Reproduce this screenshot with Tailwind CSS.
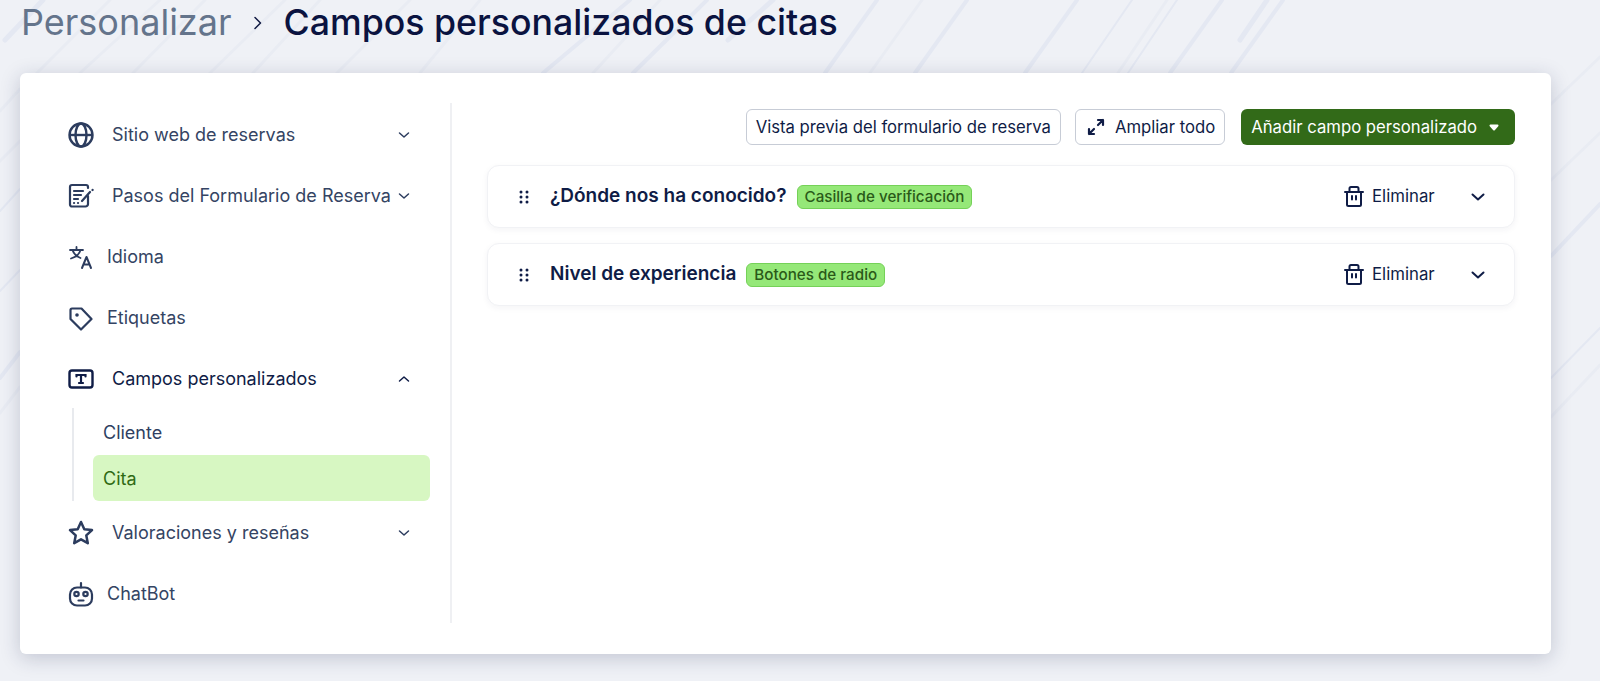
<!DOCTYPE html>
<html lang="es">
  <head>
    <meta charset="UTF-8">
    <meta name="viewport" content="width=device-width, initial-scale=1.0">
    <script src="https://cdn.jsdelivr.net/npm/@tailwindcss/browser@4"></script>
    <title>Campos personalizados de citas</title>
  </head>
  <body class="relative h-[681px] overflow-hidden bg-[#eff1f6] font-['Inter',sans-serif]">
    <!-- fondo con lineas diagonales -->
    <svg class="absolute inset-0" width="1600" height="681" fill="none" stroke-linecap="round">
      <g stroke="#e4e8f2">
        <path stroke-width="5" d="M43 0L5 40M773 0L728 40M1267 0L1240 40"/>
        <path stroke-width="4" d="M630 0L543 73M707 0L633 73M877 0L825 73M967 0L915 73M1077 0L1025 73M1222 0L1170 73M1283 0L1231 73"/>
        <path stroke-width="4" d="M1551 256L1600 204M20 352L0 378"/>
        <path stroke-width="2" d="M1132 0L1082 73M1177 0L1128 73M1551 378L1600 328M20 270L0 291M20 189L0 211"/>
      </g>
      <g stroke="#e9ecf3">
        <path stroke-width="3" d="M110 0L37 73M160 0L80 73M205 0L133 73M285 0L210 73M320 0L253 73M410 0L337 73M480 0L420 73M660 0L593 73M922 0L870 73M1167 0L1118 73"/>
        <path stroke-width="3" d="M1551 104L1600 57M1551 180L1600 133M1551 417L1600 365M20 89L0 111M20 141L0 161M20 387L0 413"/>
      </g>
    </svg>

    <div class="relative flex h-[73px] items-start pl-[21px] pt-[2px]">
      <span class="text-[36px] leading-[41px] text-[#64748b]">Personalizar</span>
      <svg class="mx-[19px] mt-[14px]" width="14" height="14" viewBox="0 0 14 14" fill="none" stroke="#101a42" stroke-width="1.5" stroke-linecap="round" stroke-linejoin="round"><path d="M4 1.500L9.500 7 4 12.500"/></svg>
      <h1 class="text-[35.700px] leading-[41px] font-[450] text-[#0a1340]">Campos personalizados de citas</h1>
    </div>

    <div class="relative mx-[20px] flex h-[581px] w-[1531px] rounded-md bg-white py-[30px] shadow-[0_4px_20px_rgba(30,41,80,0.22)]">
      <!-- menu lateral -->
      <nav class="flex h-[520px] w-[432px] flex-none flex-col border-r-2 border-[#eff0f3] pl-[48px] pr-[20px] pt-[1px] text-[18px] font-normal text-[#344463]">
        <div class="flex h-[61px] flex-none items-center">
          <svg class="mr-[18px] flex-none" width="26" height="26" viewBox="0 0 26 26" fill="none" stroke="#2c3c5e" stroke-width="2.400"><circle cx="13" cy="13" r="11.500"/><ellipse cx="13" cy="13" rx="5.500" ry="11.500"/><path d="M2 13h22"/></svg>
          <span class="flex-1">Sitio web de reservas</span>
          <svg class="mr-[19px]" width="14" height="14" viewBox="0 0 14 14" fill="none" stroke="#2c3c5e" stroke-width="1.500" stroke-linecap="round" stroke-linejoin="round"><path d="M2.500 5l4.500 4 4.500-4"/></svg>
        </div>
        <div class="flex h-[61px] flex-none items-center">
          <svg class="mr-[18px] flex-none" width="26" height="26" viewBox="0 0 26 26" fill="none" stroke="#2c3c5e" stroke-width="2.200" stroke-linecap="round" stroke-linejoin="round"><path d="M20 13v8a2.500 2.500 0 0 1-2.500 2.500H4A2 2 0 0 1 2 21.500V4a2 2 0 0 1 2-2h14a2 2 0 0 1 2 2v1"/><path d="M6 8h9M6 12h7M6 16h4M6 20h.1M10 20h.1"/><path d="M14 18l8-9M24.500 7l.1-.1"/></svg>
          <span class="flex-1 whitespace-nowrap">Pasos del Formulario de Reserva</span>
          <svg class="mr-[19px] flex-none" width="14" height="14" viewBox="0 0 14 14" fill="none" stroke="#2c3c5e" stroke-width="1.500" stroke-linecap="round" stroke-linejoin="round"><path d="M2.500 5l4.500 4 4.500-4"/></svg>
        </div>
        <div class="flex h-[61px] flex-none items-center">
          <svg class="mr-[13px] flex-none" width="26" height="26" viewBox="0 0 26 26" fill="none" stroke="#2c3c5e" stroke-width="1.800" stroke-linecap="round" stroke-linejoin="round"><path d="M2 6h13M8.500 3v3M12.500 6c-1 4-4.500 7-9.500 8.500M4.500 6c1 3.500 4 6.500 8 8"/><path stroke-width="2" d="M14 24l4.500-11 4.500 11M15.500 20.500h6"/></svg>
          <span>Idioma</span>
        </div>
        <div class="flex h-[61px] flex-none items-center">
          <svg class="mr-[13px] flex-none" width="26" height="26" viewBox="0 0 26 26" fill="none" stroke="#2c3c5e" stroke-width="2.200" stroke-linejoin="round"><path d="M2.500 5A1.500 1.500 0 0 1 4 3.500H13.500L23.500 14 13 24.500 2.500 14z"/><circle cx="9" cy="10" r="1.800" fill="#2c3c5e" stroke="none"/></svg>
          <span>Etiquetas</span>
        </div>
        <div class="flex h-[61px] flex-none items-center text-[#0f1c46]">
          <svg class="mr-[18px] flex-none" width="26" height="26" viewBox="0 0 26 26" fill="none" stroke="#0f1c46" stroke-width="2.400"><rect x="1.500" y="4.500" width="23" height="17" rx="2.500"/><path stroke-width="2.200" stroke-linecap="round" d="M8.500 10.500V9h9v1.500M13 9v8M11 17h4"/></svg>
          <span class="flex-1">Campos personalizados</span>
          <svg class="mr-[19px]" width="14" height="14" viewBox="0 0 14 14" fill="none" stroke="#0f1c46" stroke-width="1.500" stroke-linecap="round" stroke-linejoin="round"><path d="M2.500 9l4.500-4 4.500 4"/></svg>
        </div>
        <div class="-mt-[1px] ml-[4px] flex h-[93px] flex-none flex-col justify-end border-l-2 border-[#e8eaee] pl-[19px]">
          <div class="flex h-[46px] items-center pl-[10px] text-[#2f3f62]">Cliente</div>
          <div class="flex h-[46px] items-center rounded-md bg-[#d7f7c2] pl-[10px] text-[#2f6a14]">Cita</div>
        </div>
        <div class="mt-[1px] flex h-[61px] flex-none items-center">
          <svg class="mr-[18px] flex-none" width="26" height="26" viewBox="0 0 26 26" fill="none" stroke="#2c3c5e" stroke-width="2.500" stroke-linejoin="round"><path d="M13 2l3.300 7.200 7.700.9-5.700 5.300 1.500 7.800L13 19.300l-6.800 3.900 1.500-7.800L2 10.100l7.700-.9z"/></svg>
          <span class="flex-1">Valoraciones y reseñas</span>
          <svg class="mr-[19px]" width="14" height="14" viewBox="0 0 14 14" fill="none" stroke="#2c3c5e" stroke-width="1.500" stroke-linecap="round" stroke-linejoin="round"><path d="M2.500 5l4.500 4 4.500-4"/></svg>
        </div>
        <div class="flex h-[61px] flex-none items-center">
          <svg class="mr-[13px] flex-none" width="26" height="26" viewBox="0 0 26 26" fill="none" stroke="#2c3c5e" stroke-width="2.200" stroke-linecap="round"><rect x="2" y="6.500" width="22" height="18" rx="7"/><path d="M13 2v4.500M10.500 19.500h5"/><circle cx="8.500" cy="13" r="2.200"/><circle cx="17.500" cy="13" r="2.200"/></svg>
          <span>ChatBot</span>
        </div>
      </nav>

      <!-- contenido -->
      <main class="min-w-0 flex-1 pl-[35px] pr-[36px] pt-[6px]">
        <div class="flex h-[36px] justify-end gap-[14px] text-[16.700px] font-normal leading-none">
          <button class="h-[36px] rounded-md border border-[#c7ccd6] bg-white px-[9px] whitespace-nowrap text-[#0f1c46]">Vista previa del formulario de reserva</button>
          <button class="flex h-[36px] items-center gap-[9px] rounded-md border border-[#c7ccd6] bg-white pl-[10px] pr-[9px] whitespace-nowrap text-[#0f1c46]">
            <svg width="20" height="20" viewBox="0 0 20 20" fill="none" stroke="#0f1c46" stroke-width="2.200" stroke-linecap="round" stroke-linejoin="round"><path d="M12 3h5v5M17 3l-5 5M3 12v5h5M3 17l5-5"/></svg>
            Ampliar todo
          </button>
          <button class="ml-[2px] flex h-[36px] items-center rounded-md bg-[#326a18] pl-[10px] pr-[14px] whitespace-nowrap text-white">
            Añadir campo personalizado
            <svg class="ml-[10px]" width="14" height="14" viewBox="0 0 14 14" fill="#fff" stroke="#fff" stroke-width="2" stroke-linejoin="round"><path d="M3.500 5.500h7L7 9.500z"/></svg>
          </button>
        </div>

        <div class="mt-[20px] flex flex-col gap-[15px]">
          <div class="flex h-[63px] items-center rounded-xl border border-[#f1f2f5] bg-white pl-[31px] pr-[28px] shadow-[0_2px_6px_rgba(30,41,80,0.05)]">
            <svg class="mr-[21px] flex-none" width="10" height="14" viewBox="0 0 10 14" fill="#0f1c46"><circle cx="2" cy="2" r="1.500"/><circle cx="8" cy="2" r="1.500"/><circle cx="2" cy="7" r="1.500"/><circle cx="8" cy="7" r="1.500"/><circle cx="2" cy="12" r="1.500"/><circle cx="8" cy="12" r="1.500"/></svg>
            <span class="text-[19px] font-semibold text-[#0f1c46]">¿Dónde nos ha conocido?</span>
            <span class="ml-[10px] mt-[1px] rounded-md border border-[#75d158] bg-[#95e878] px-[7px] py-[2px] text-[15.200px] leading-[18px] font-medium text-[#2a5a18]">Casilla de verificación</span>
            <svg class="ml-auto flex-none" width="20" height="21" viewBox="0 0 20 21" fill="none" stroke="#0f1c46" stroke-width="2" stroke-linecap="round" stroke-linejoin="round"><path d="M1 6h18M5.500 6V2.500A1.500 1.500 0 0 1 7 1h6a1.500 1.500 0 0 1 1.500 1.500V6M3 6v12.500A1.500 1.500 0 0 0 4.500 20h11a1.500 1.500 0 0 0 1.500-1.500V6M8 10v3.500M12 10v3.500"/></svg>
            <span class="ml-[8px] w-[64px] text-[16.800px] font-normal text-[#0f1c46]">Eliminar</span>
            <svg class="ml-[34px] flex-none" width="16" height="16" viewBox="0 0 16 16" fill="none" stroke="#0f1c46" stroke-width="2" stroke-linecap="round" stroke-linejoin="round"><path d="M2.500 5.500L8 10.500l5.500-5"/></svg>
          </div>
          <div class="flex h-[63px] items-center rounded-xl border border-[#f1f2f5] bg-white pl-[31px] pr-[28px] shadow-[0_2px_6px_rgba(30,41,80,0.05)]">
            <svg class="mr-[21px] flex-none" width="10" height="14" viewBox="0 0 10 14" fill="#0f1c46"><circle cx="2" cy="2" r="1.500"/><circle cx="8" cy="2" r="1.500"/><circle cx="2" cy="7" r="1.500"/><circle cx="8" cy="7" r="1.500"/><circle cx="2" cy="12" r="1.500"/><circle cx="8" cy="12" r="1.500"/></svg>
            <span class="text-[19px] font-semibold text-[#0f1c46]">Nivel de experiencia</span>
            <span class="ml-[10px] mt-[1px] rounded-md border border-[#75d158] bg-[#95e878] px-[7px] py-[2px] text-[15.200px] leading-[18px] font-medium text-[#2a5a18]">Botones de radio</span>
            <svg class="ml-auto flex-none" width="20" height="21" viewBox="0 0 20 21" fill="none" stroke="#0f1c46" stroke-width="2" stroke-linecap="round" stroke-linejoin="round"><path d="M1 6h18M5.500 6V2.500A1.500 1.500 0 0 1 7 1h6a1.500 1.500 0 0 1 1.500 1.500V6M3 6v12.500A1.500 1.500 0 0 0 4.500 20h11a1.500 1.500 0 0 0 1.500-1.500V6M8 10v3.500M12 10v3.500"/></svg>
            <span class="ml-[8px] w-[64px] text-[16.800px] font-normal text-[#0f1c46]">Eliminar</span>
            <svg class="ml-[34px] flex-none" width="16" height="16" viewBox="0 0 16 16" fill="none" stroke="#0f1c46" stroke-width="2" stroke-linecap="round" stroke-linejoin="round"><path d="M2.500 5.500L8 10.500l5.500-5"/></svg>
          </div>
        </div>
      </main>
    </div>
  </body>
</html>
